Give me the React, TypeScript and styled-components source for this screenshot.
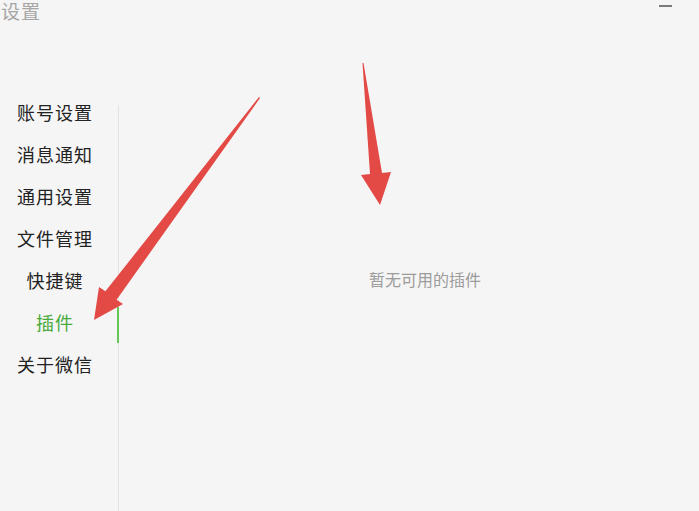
import React from 'react';
import styled, { createGlobalStyle } from 'styled-components';

const GlobalStyle = createGlobalStyle`
  html, body {
    margin: 0;
    padding: 0;
    background: #f5f5f5;
  }
  body {
    font-family: "Noto Sans CJK SC", "Noto Sans", sans-serif;
  }
`;

const Window = styled.div`
  position: relative;
  width: 699px;
  height: 511px;
  display: flex;
  flex-direction: column;
  background: #f5f5f5;
  overflow: hidden;
`;

const TitleBar = styled.div`
  height: 24px;
  display: flex;
  align-items: flex-start;
  justify-content: space-between;
  padding-right: 27px;
`;

const Title = styled.div`
  font-size: 19px;
  line-height: 21px;
  color: #a6a6a6;
  padding-left: 1px;
  letter-spacing: 1px;
`;

const MinimizeButton = styled.button`
  width: 13px;
  height: 2px;
  margin-top: 5px;
  padding: 0;
  border: 0;
  background: #7a7a7a;
`;

const Body = styled.div`
  flex: 1;
  display: flex;
`;

const Nav = styled.nav`
  width: 118px;
  box-sizing: border-box;
  padding: 70px 8px 0 0;
  display: flex;
  flex-direction: column;
  gap: 6px;
`;

const NavItem = styled.div<{ $active?: boolean }>`
  position: relative;
  height: 36px;
  line-height: 36px;
  text-align: center;
  font-size: 18px;
  letter-spacing: 1px;
  color: ${p => (p.$active ? '#4aab3b' : '#222')};

  &::after {
    content: '';
    display: ${p => (p.$active ? 'block' : 'none')};
    position: absolute;
    top: 3px;
    right: -9px;
    width: 2px;
    height: 36px;
    background: #66c657;
  }
`;

const Divider = styled.div`
  width: 1px;
  margin-top: 81px;
  background: #e2e2e2;
`;

const Content = styled.main`
  flex: 1;
  display: flex;
  justify-content: center;
  padding: 243px 0 0 32px;
`;

const EmptyText = styled.div`
  font-size: 16px;
  line-height: 24px;
  color: #9c9c9c;
`;

const Annotations = styled.svg`
  position: absolute;
  left: 0;
  top: 0;
  pointer-events: none;
`;

const menu = ['账号设置', '消息通知', '通用设置', '文件管理', '快捷键', '插件', '关于微信'];

export default function App() {
  return (
    <>
      <GlobalStyle />
      <Window>
        <TitleBar>
          <Title>设置</Title>
          <MinimizeButton aria-label="minimize" />
        </TitleBar>
        <Body>
          <Nav>
            {menu.map(item => (
              <NavItem key={item} $active={item === '插件'}>
                {item}
              </NavItem>
            ))}
          </Nav>
          <Divider />
          <Content>
            <EmptyText>暂无可用的插件</EmptyText>
          </Content>
        </Body>
        <Annotations width="699" height="511" viewBox="0 0 699 511">
          <polygon
            fill="#e34a45"
            points="259,97 260,98 116.6,299.7 123,304 94,320 99,287 105.4,291.3"
          />
          <polygon
            fill="#e34a45"
            points="362.5,63 363.5,63 382,173 391,172 380,205 361,175 370,174"
          />
        </Annotations>
      </Window>
    </>
  );
}
